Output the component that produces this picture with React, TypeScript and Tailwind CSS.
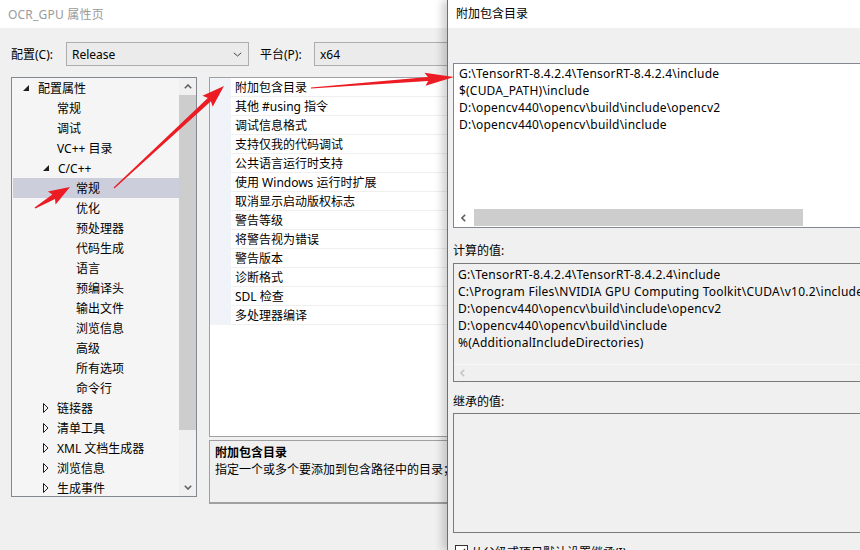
import React from "react";

type TreeRow = { t: string; lvl: 0 | 1 | 2; kind: "exp" | "col" | "leaf"; sel?: boolean };

const tree: TreeRow[] = [
  { t: "配置属性", lvl: 0, kind: "exp" },
  { t: "常规", lvl: 1, kind: "leaf" },
  { t: "调试", lvl: 1, kind: "leaf" },
  { t: "VC++ 目录", lvl: 1, kind: "leaf" },
  { t: "C/C++", lvl: 1, kind: "exp" },
  { t: "常规", lvl: 2, kind: "leaf", sel: true },
  { t: "优化", lvl: 2, kind: "leaf" },
  { t: "预处理器", lvl: 2, kind: "leaf" },
  { t: "代码生成", lvl: 2, kind: "leaf" },
  { t: "语言", lvl: 2, kind: "leaf" },
  { t: "预编译头", lvl: 2, kind: "leaf" },
  { t: "输出文件", lvl: 2, kind: "leaf" },
  { t: "浏览信息", lvl: 2, kind: "leaf" },
  { t: "高级", lvl: 2, kind: "leaf" },
  { t: "所有选项", lvl: 2, kind: "leaf" },
  { t: "命令行", lvl: 2, kind: "leaf" },
  { t: "链接器", lvl: 1, kind: "col" },
  { t: "清单工具", lvl: 1, kind: "col" },
  { t: "XML 文档生成器", lvl: 1, kind: "col" },
  { t: "浏览信息", lvl: 1, kind: "col" },
  { t: "生成事件", lvl: 1, kind: "col" },
];

const props = [
  "附加包含目录",
  "其他 #using 指令",
  "调试信息格式",
  "支持仅我的代码调试",
  "公共语言运行时支持",
  "使用 Windows 运行时扩展",
  "取消显示启动版权标志",
  "警告等级",
  "将警告视为错误",
  "警告版本",
  "诊断格式",
  "SDL 检查",
  "多处理器编译",
];

const editLines = [
  "G:\\TensorRT-8.4.2.4\\TensorRT-8.4.2.4\\include",
  "$(CUDA_PATH)\\include",
  "D:\\opencv440\\opencv\\build\\include\\opencv2",
  "D:\\opencv440\\opencv\\build\\include",
];

const computedLines = [
  "G:\\TensorRT-8.4.2.4\\TensorRT-8.4.2.4\\include",
  "C:\\Program Files\\NVIDIA GPU Computing Toolkit\\CUDA\\v10.2\\include",
  "D:\\opencv440\\opencv\\build\\include\\opencv2",
  "D:\\opencv440\\opencv\\build\\include",
  "%(AdditionalIncludeDirectories)",
];

function ExpTri() {
  return (
    <svg width="6" height="6" viewBox="0 0 6 6" className="shrink-0">
      <polygon points="6,0 6,6 0,6" fill="#1e1e1e" />
    </svg>
  );
}
function ColTri() {
  return (
    <svg width="6" height="10" viewBox="0 0 6 10" className="shrink-0">
      <polygon points="0.5,0.5 5,5 0.5,9.5" fill="none" stroke="#1e1e1e" strokeWidth="1" />
    </svg>
  );
}

function Chevron({ dir, color = "#606060", w = 8, h = 5, sw = 1.6 }: { dir: "up" | "down" | "left"; color?: string; w?: number; h?: number; sw?: number }) {
  if (dir === "left") {
    return (
      <svg width={h} height={w} viewBox={`0 0 ${h} ${w}`}>
        <polyline points={`${h - 0.8},0.8 1,${w / 2} ${h - 0.8},${w - 0.8}`} fill="none" stroke={color} strokeWidth={sw} />
      </svg>
    );
  }
  const pts = dir === "up" ? `0.8,${h - 0.8} ${w / 2},1 ${w - 0.8},${h - 0.8}` : `0.8,0.8 ${w / 2},${h - 1} ${w - 0.8},0.8`;
  return (
    <svg width={w} height={h} viewBox={`0 0 ${w} ${h}`}>
      <polyline points={pts} fill="none" stroke={color} strokeWidth={sw} />
    </svg>
  );
}

function arrowPts(x1: number, y1: number, x2: number, y2: number, tailW: number, shaftW: number, headLen: number, headW: number) {
  const dx = x2 - x1;
  const dy = y2 - y1;
  const L = Math.hypot(dx, dy);
  const ux = dx / L;
  const uy = dy / L;
  const nx = -uy;
  const ny = ux;
  const bx = x2 - ux * headLen;
  const by = y2 - uy * headLen;
  const bx2 = x2 - ux * headLen * 1.12;
  const by2 = y2 - uy * headLen * 1.12;
  const p = (x: number, y: number) => `${x.toFixed(1)},${y.toFixed(1)}`;
  return [
    p(x1 + (nx * tailW) / 2, y1 + (ny * tailW) / 2),
    p(bx + (nx * shaftW) / 2, by + (ny * shaftW) / 2),
    p(bx2 + (nx * headW) / 2, by2 + (ny * headW) / 2),
    p(x2, y2),
    p(bx2 - (nx * headW) / 2, by2 - (ny * headW) / 2),
    p(bx - (nx * shaftW) / 2, by - (ny * shaftW) / 2),
    p(x1 - (nx * tailW) / 2, y1 - (ny * tailW) / 2),
  ].join(" ");
}

const treePad: Record<string, string> = {
  "0exp": "pl-[10px]",
  "1exp": "pl-[30px]",
  "1col": "pl-[30px]",
  "1leaf": "pl-[44px]",
  "2leaf": "pl-[63px]",
};

export default function App() {
  return (
    <div className="relative w-[860px] h-[550px] overflow-hidden bg-[#f0f0f0] text-[12px] leading-[17px] text-black font-['Noto_Sans','Noto_Sans_CJK_SC',sans-serif]">
      {/* Background property window */}
      <div className="flex flex-col h-full">
        <div className="h-[28px] bg-white flex items-center pl-[8px] text-[#9a9a9a] shrink-0 tracking-[0.2px]">OCR_GPU 属性页</div>
        <div className="flex flex-col pl-[11px] pt-[14px]">
          <div className="flex items-center h-[24px]">
            <span className="w-[55px]">配置(C):</span>
            <div className="w-[183px] h-[24px] border border-[#adadad] bg-[#ebebeb] flex items-center justify-between pl-[5px] pr-[6px]">
              <span>Release</span>
              <Chevron dir="down" w={9} h={5} sw={1} color="#404040" />
            </div>
            <span className="ml-[11px] w-[54px]">平台(P):</span>
            <div className="w-[200px] h-[24px] border border-[#adadad] bg-[#ebebeb] flex items-center pl-[5px]">
              <span>x64</span>
            </div>
          </div>

          <div className="flex mt-[11px] gap-[12px]">
            {/* Tree */}
            <div className="w-[186px] h-[420px] border border-[#828790] bg-[#f5f5f5] flex overflow-hidden">
              <div className="flex-1 flex flex-col pl-[1px] overflow-hidden">
                {tree.map((r, i) => (
                  <div
                    key={i}
                    className={`h-[20px] shrink-0 flex items-center whitespace-nowrap ${treePad[r.lvl + r.kind]} ${r.sel ? "bg-[#cccedb]" : ""}`}
                  >
                    {r.kind === "exp" && (
                      <span className="w-[15px] flex items-center">
                        <ExpTri />
                      </span>
                    )}
                    {r.kind === "col" && (
                      <span className="w-[14px] flex items-center">
                        <ColTri />
                      </span>
                    )}
                    <span>{r.t}</span>
                  </div>
                ))}
              </div>
              <div className="w-[17px] flex flex-col bg-[#f0f0f0] shrink-0">
                <div className="h-[17px] flex items-center justify-center">
                  <Chevron dir="up" />
                </div>
                <div className="h-[335px] bg-[#cdcdcd]" />
                <div className="flex-1" />
                <div className="h-[17px] flex items-center justify-center">
                  <Chevron dir="down" />
                </div>
              </div>
            </div>

            {/* Property list + description */}
            <div className="flex flex-col gap-[3px]">
              <div className="w-[260px] h-[360px] border border-[#a0a0a0] bg-white">
                {props.map((p, i) => (
                  <div key={i} className="flex h-[19px]">
                    <div className="w-[21px] bg-[#f0f4f9] shrink-0" />
                    <div className="flex-1 flex items-center pl-[4px] border-b border-[#efefef] whitespace-nowrap">{p}</div>
                  </div>
                ))}
              </div>
              <div className="w-[260px] h-[64px] border border-[#a0a0a0] border-b-2 bg-[#f0f0f0] pl-[5px] pt-[3px] whitespace-nowrap">
                <div className="font-bold">附加包含目录</div>
                <div>指定一个或多个要添加到包含路径中的目录；如有多个路径</div>
              </div>
            </div>
          </div>
        </div>
      </div>

      {/* Foreground dialog */}
      <div className="absolute left-[447px] top-0 w-[440px] h-[550px] border-l border-[#6f6f6f] bg-[#f0f0f0] shadow-[-5px_0_8px_rgba(0,0,0,0.18)] flex flex-col">
        <div className="h-[28px] bg-white flex items-center pl-[8px] pb-[2px] shrink-0">附加包含目录</div>
        <div className="flex flex-col pl-[5px]">
          <div className="mt-[35px] w-[420px] h-[165px] border border-[#828790] bg-white flex flex-col">
            <div className="flex-1 pl-[5px] pt-[1px] whitespace-nowrap tracking-[0.2px]">
              {editLines.map((l, i) => (
                <div key={i} className="h-[17px] flex items-center">{l}</div>
              ))}
            </div>
            <div className="h-[17px] flex items-center bg-white mx-[1px] mb-[1px]">
              <div className="w-[17px] flex items-center justify-center">
                <Chevron dir="left" w={8} h={5} />
              </div>
              <div className="ml-[2px] w-[329px] h-[17px] bg-[#cdcdcd]" />
            </div>
          </div>

          <div className="mt-[14px] h-[17px] flex items-center">计算的值:</div>
          <div className="mt-[4px] w-[420px] h-[119px] border border-[#7a7a7a] bg-[#f0f0f0] flex flex-col">
            <div className="flex-1 pl-[4px] pt-[2px] whitespace-nowrap tracking-[0.25px]">
              {computedLines.map((l, i) => (
                <div key={i} className="h-[17px] flex items-center">{l}</div>
              ))}
            </div>
            <div className="h-[17px] flex items-center border-t border-[#f8f8f8]">
              <div className="w-[17px] flex items-center justify-center">
                <Chevron dir="left" w={8} h={5} color="#c4c4c4" />
              </div>
            </div>
          </div>

          <div className="mt-[11px] h-[17px] flex items-center">继承的值:</div>
          <div className="mt-[3px] w-[420px] h-[120px] border border-[#7a7a7a] bg-[#f0f0f0]" />

          <div className="mt-[12px] flex items-start pl-[2px]">
            <div className="w-[13px] h-[13px] border border-[#333] bg-white flex items-center justify-center shrink-0">
              <svg width="9" height="8" viewBox="0 0 9 8">
                <polyline points="1,4 3.5,6.5 8,1" fill="none" stroke="#333" strokeWidth="1.3" />
              </svg>
            </div>
            <span className="ml-[3px] -mt-[1px]">从父级或项目默认设置继承(I)</span>
          </div>
        </div>
      </div>

      {/* Red annotation arrows */}
      <svg className="absolute left-0 top-0 pointer-events-none" width="860" height="550" viewBox="0 0 860 550">
        <polygon points={arrowPts(114, 188, 224, 86, 1.2, 4.5, 20, 15)} fill="#ec1c24" />
        <polygon points={arrowPts(35, 208, 70, 187, 1.5, 5, 19, 15)} fill="#ec1c24" />
        <polygon points={arrowPts(311, 88, 454, 77, 1.2, 4, 26, 13)} fill="#ec1c24" />
      </svg>
    </div>
  );
}
